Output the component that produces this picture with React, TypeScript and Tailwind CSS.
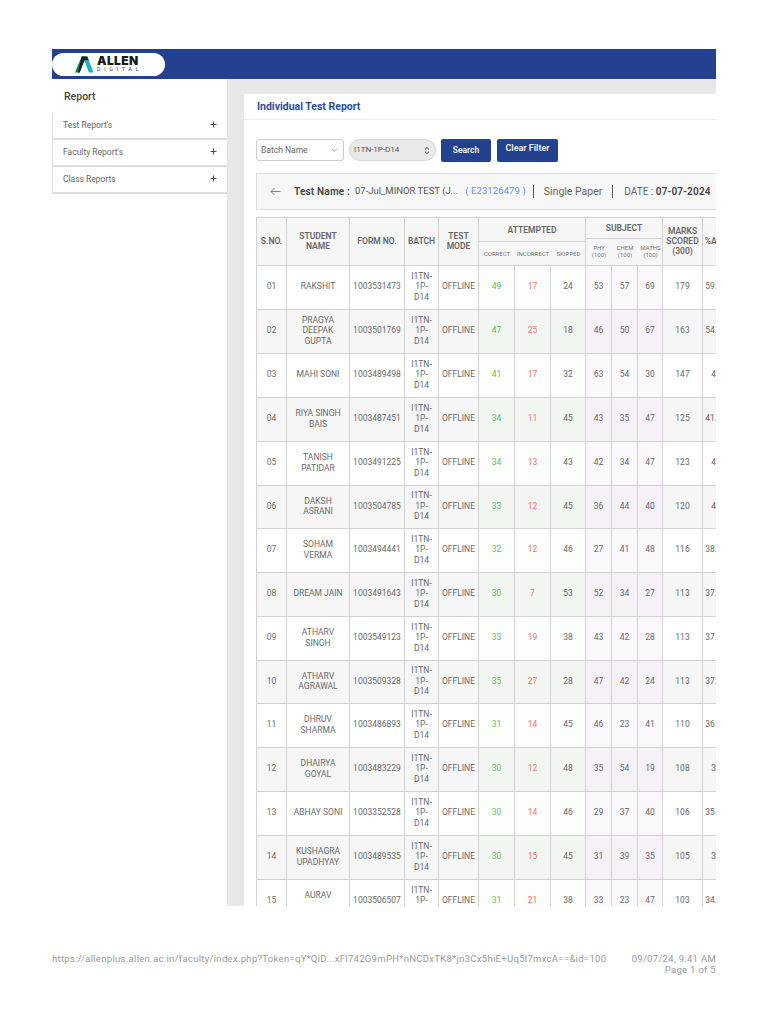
const rows: [string, string[], string, number, number, number, number, number, number, number, string][] = [
  ["01", ["RAKSHIT"], "1003531473", 49, 17, 24, 53, 57, 69, 179, "59.67"],
  ["02", ["PRAGYA", "DEEPAK", "GUPTA"], "1003501769", 47, 25, 18, 46, 50, 67, 163, "54.33"],
  ["03", ["MAHI SONI"], "1003489498", 41, 17, 32, 63, 54, 30, 147, "49"],
  ["04", ["RIYA SINGH", "BAIS"], "1003487451", 34, 11, 45, 43, 35, 47, 125, "41.67"],
  ["05", ["TANISH", "PATIDAR"], "1003491225", 34, 13, 43, 42, 34, 47, 123, "41"],
  ["06", ["DAKSH", "ASRANI"], "1003504785", 33, 12, 45, 36, 44, 40, 120, "40"],
  ["07", ["SOHAM", "VERMA"], "1003494441", 32, 12, 46, 27, 41, 48, 116, "38.67"],
  ["08", ["DREAM JAIN"], "1003491643", 30, 7, 53, 52, 34, 27, 113, "37.67"],
  ["09", ["ATHARV", "SINGH"], "1003549123", 33, 19, 38, 43, 42, 28, 113, "37.67"],
  ["10", ["ATHARV", "AGRAWAL"], "1003509328", 35, 27, 28, 47, 42, 24, 113, "37.67"],
  ["11", ["DHRUV", "SHARMA"], "1003486893", 31, 14, 45, 46, 23, 41, 110, "36.67"],
  ["12", ["DHAIRYA", "GOYAL"], "1003483229", 30, 12, 48, 35, 54, 19, 108, "36"],
  ["13", ["ABHAY SONI"], "1003352528", 30, 14, 46, 29, 37, 40, 106, "35.33"],
  ["14", ["KUSHAGRA", "UPADHYAY"], "1003489535", 30, 15, 45, 31, 39, 35, 105, "35"],
  ["15", ["AURAV", "\u00a0"], "1003506507", 31, 21, 38, 33, 23, 47, 103, "34.33"],
];

const widths = [30, 63, 55, 34, 40, 36, 36, 35, 26, 26, 25, 40, 27];
const td = "border border-[#d2d2d2] text-center align-middle p-0";
const bd = `${td} pb-[2px]`;

function Logo() {
  return (
    <svg width="19" height="17" viewBox="0 0 20 17" className="shrink-0">
      <path d="M0 17 L7 0 L11 0 L5 17 Z" fill="#10804f" />
      <path d="M7 0 L13 0 L19.5 17 L14.5 17 L11 7 Z" fill="#17b3cb" />
      <path d="M7 0 L13 0 L14.5 4 L10 4 L5 17 L3 17 Z" fill="#18232c" />
    </svg>
  );
}

function Plus() {
  return (
    <svg width="7" height="7" viewBox="0 0 7 7" className="mb-[3px] shrink-0">
      <path d="M3.5 0.5V6.5M0.5 3.5H6.5" stroke="#4a4a4a" strokeWidth="1.1" />
    </svg>
  );
}

function Sidebar() {
  return (
    <aside className="w-[175px] shrink-0 bg-white">
      <div className="h-[34px] pl-3 pt-[11px] text-[10.5px] leading-[14px] font-medium text-[#444444]">Report</div>
      <div className="border-l border-[#dddddd]">
        {["Test Report's", "Faculty Report's", "Class Reports"].map((t) => (
          <div key={t} className="flex h-[27px] items-center justify-between border-b-2 border-[#dddddd] pl-[10px] pr-[10px] text-[8.5px] text-[#666666]">
            <span>{t}</span>
            <Plus />
          </div>
        ))}
      </div>
    </aside>
  );
}

function Filters() {
  return (
    <div className="flex h-[23px] items-start">
      <div className="flex h-[22px] w-[88px] items-center justify-between rounded-[3px] border border-[#cccccc] bg-white pl-1 pr-[5px] text-[8.5px] text-[#666666]">
        <span>Batch Name</span>
        <svg width="7" height="5" viewBox="0 0 7 5"><path d="M1 1l2.5 2.5L6 1" fill="none" stroke="#aaaaaa" strokeWidth="0.8" /></svg>
      </div>
      <div className="ml-[5px] flex h-[22px] w-[87px] items-center justify-between rounded-[11px] border border-[#d5d5d5] bg-[#e9e9e9] pl-[4px] pr-[5px] text-[8px] text-[#555555]">
        <span>I1TN-1P-D14</span>
        <svg width="6" height="9" viewBox="0 0 6 9"><path d="M1 3.4L3 1.5l2 1.9M1 5.6l2 1.9 2-1.9" fill="none" stroke="#444444" strokeWidth="1" /></svg>
      </div>
      <div className="ml-[5px] flex h-[23px] w-[50px] items-center justify-center rounded-[2px] bg-[#23418f] text-[8.5px] font-semibold text-[#f0f3fa]">Search</div>
      <div className="ml-[6px] h-[23px] w-[61px] rounded-[2px] bg-[#23418f] pt-[3px] text-center text-[9px] leading-[12px] font-semibold text-[#f0f3fa]">Clear Filter</div>
    </div>
  );
}

function TestBar() {
  return (
    <div className="mt-[11px] flex h-[37px] w-[480px] items-center border border-[#dcdcdc] bg-[#f7f7f7] pl-[13px] whitespace-nowrap text-[#555555]">
      <svg width="11" height="9" viewBox="0 0 11 9" className="shrink-0"><path d="M10.5 4.5H1M4.5 1L1 4.5 4.5 8" fill="none" stroke="#777777" strokeWidth="0.9" /></svg>
      <span className="ml-[13px] text-[10px] font-semibold tracking-[0.2px] text-[#444444]">Test Name :</span>
      <span className="ml-[5px] text-[9.5px]">07-Jul_MINOR TEST (J...</span>
      <span className="ml-[7px] text-[9.5px] tracking-[0.1px] text-[#6b8cff]">( E23126479 )</span>
      <span className="ml-[7px] h-[13px] w-px bg-[#555555]" />
      <span className="ml-[10px] text-[10.5px] text-[#666666]">Single Paper</span>
      <span className="ml-[10px] h-[13px] w-px bg-[#555555]" />
      <span className="ml-[11px] text-[10px] text-[#666666]">DATE : <b className="font-semibold tracking-[0.2px] text-[#444444]">07-07-2024</b></span>
    </div>
  );
}

function Table() {
  const h = "text-[8.5px] leading-[10px] font-semibold text-[#666666]";
  const sm = "flex items-center justify-center text-[6px] leading-[7px] font-normal text-[#777777]";
  return (
    <table className="mt-[7px] w-[473px] table-fixed border-collapse text-[8.5px] leading-[10.5px] text-[#6a6a6a]">
      <colgroup>
        {widths.map((w, i) => <col key={i} style={{ width: w }} />)}
      </colgroup>
      <thead>
        <tr className="h-[48px] bg-[#f6f6f6]">
          <th className={`${bd} ${h}`}>S.NO.</th>
          <th className={`${bd} ${h} text-[#333333]`}>STUDENT<br />NAME</th>
          <th className={`${bd} ${h}`}>FORM NO.</th>
          <th className={`${bd} ${h}`}>BATCH</th>
          <th className={`${bd} ${h}`}>TEST<br />MODE</th>
          <th colSpan={3} className={`${td} ${h}`}>
            <div className="flex h-[24px] items-center justify-center border-b border-[#d2d2d2]">ATTEMPTED</div>
            <div className="grid h-[23px] grid-cols-[36px_36px_35px] pb-[1px]">
              <span className={sm}>CORRECT</span>
              <span className={sm}>INCORRECT</span>
              <span className={sm}>SKIPPED</span>
            </div>
          </th>
          <th colSpan={3} className={`${td} ${h}`}>
            <div className="flex h-[21px] items-center justify-center border-b border-[#d2d2d2]">SUBJECT</div>
            <div className="grid h-[26px] grid-cols-[26px_26px_25px] pb-[2px]">
              <span className={`${sm} text-center`}>PHY<br />(100)</span>
              <span className={`${sm} text-center`}>CHEM<br />(100)</span>
              <span className={`${sm} text-center`}>MATHS<br />(100)</span>
            </div>
          </th>
          <th className={`${bd} ${h}`}>MARKS<br />SCORED<br />(300)</th>
          <th className={`${bd} ${h}`}>%AGE</th>
        </tr>
      </thead>
      <tbody>
        {rows.map((r, i) => {
          const even = i % 2 === 1;
          const base = even ? "bg-[#f6f6f6]" : "bg-white";
          const green = even ? "bg-[#f1f6f1]" : "bg-[#fbfefb]";
          const purple = even ? "bg-[#f5f1f7]" : "bg-[#fbf8fc]";
          const height = i === 5 || i === 9 ? "h-[43px]" : "h-[44px]";
          return (
            <tr key={r[0]} className={`${height} ${base}`}>
              <td className={bd}>{r[0]}</td>
              <td className={bd}>{r[1].map((n, k) => <div key={k}>{n}</div>)}</td>
              <td className={bd}>{r[2]}</td>
              <td className={bd}>I1TN-<br />1P-<br />D14</td>
              <td className={bd}>OFFLINE</td>
              <td className={`${bd} ${green} text-[#62bd62]`}>{r[3]}</td>
              <td className={`${bd} ${green} text-[#f47070]`}>{r[4]}</td>
              <td className={`${bd} ${green}`}>{r[5]}</td>
              <td className={`${bd} ${purple}`}>{r[6]}</td>
              <td className={`${bd} ${purple}`}>{r[7]}</td>
              <td className={`${bd} ${purple}`}>{r[8]}</td>
              <td className={bd}>{r[9]}</td>
              <td className={bd}>{r[10]}</td>
            </tr>
          );
        })}
      </tbody>
    </table>
  );
}

export default function App() {
  return (
    <div className="h-[1024px] w-[768px] overflow-hidden bg-white pt-[49px] pl-[52px] font-['Roboto',sans-serif]">
      <div className="h-[857px] w-[664px] overflow-hidden">
        <header className="flex h-[30px] items-start border-t border-[#1f3c8c] bg-[#23418f] pt-[3px]">
          <div className="flex h-[23px] w-[113px] items-center rounded-[12px] bg-white pl-[23px]">
            <Logo />
            <div className="ml-[3px] flex flex-col">
              <span className="font-['Inter',sans-serif] text-[12px] leading-[10px] font-black tracking-[0.4px] text-[#1a1a1a]">ALLEN</span>
              <span className="text-[5.5px] leading-[7px] tracking-[3.6px] text-[#444444]">DIGITAL</span>
            </div>
          </div>
        </header>
        <div className="flex h-[827px]">
          <Sidebar />
          <main className="flex-1 bg-[#e8e8e8] pt-[15px] pl-[17px]">
            <section className="h-full overflow-hidden bg-white">
              <h1 className="flex h-[26px] items-center border-b border-[#eeeeee] pl-[13px] text-[10.5px] font-bold text-[#2c4c9c]">Individual Test Report</h1>
              <div className="pt-[19px] pl-[12px]">
                <Filters />
                <TestBar />
                <Table />
              </div>
            </section>
          </main>
        </div>
      </div>
      <footer className="mt-[47px] flex w-[664px] justify-between text-[9.5px] leading-[11px] tracking-[0.3px] text-[#999999]">
        <span>https://allenplus.allen.ac.in/faculty/index.php?Token=qY*QiD...xFl742G9mPH*nNCDxTK8*jn3Cx5hiE+Uq5l7mxcA==&amp;id=100</span>
        <span className="text-right">09/07/24, 9:41 AM<br />Page 1 of 5</span>
      </footer>
    </div>
  );
}
